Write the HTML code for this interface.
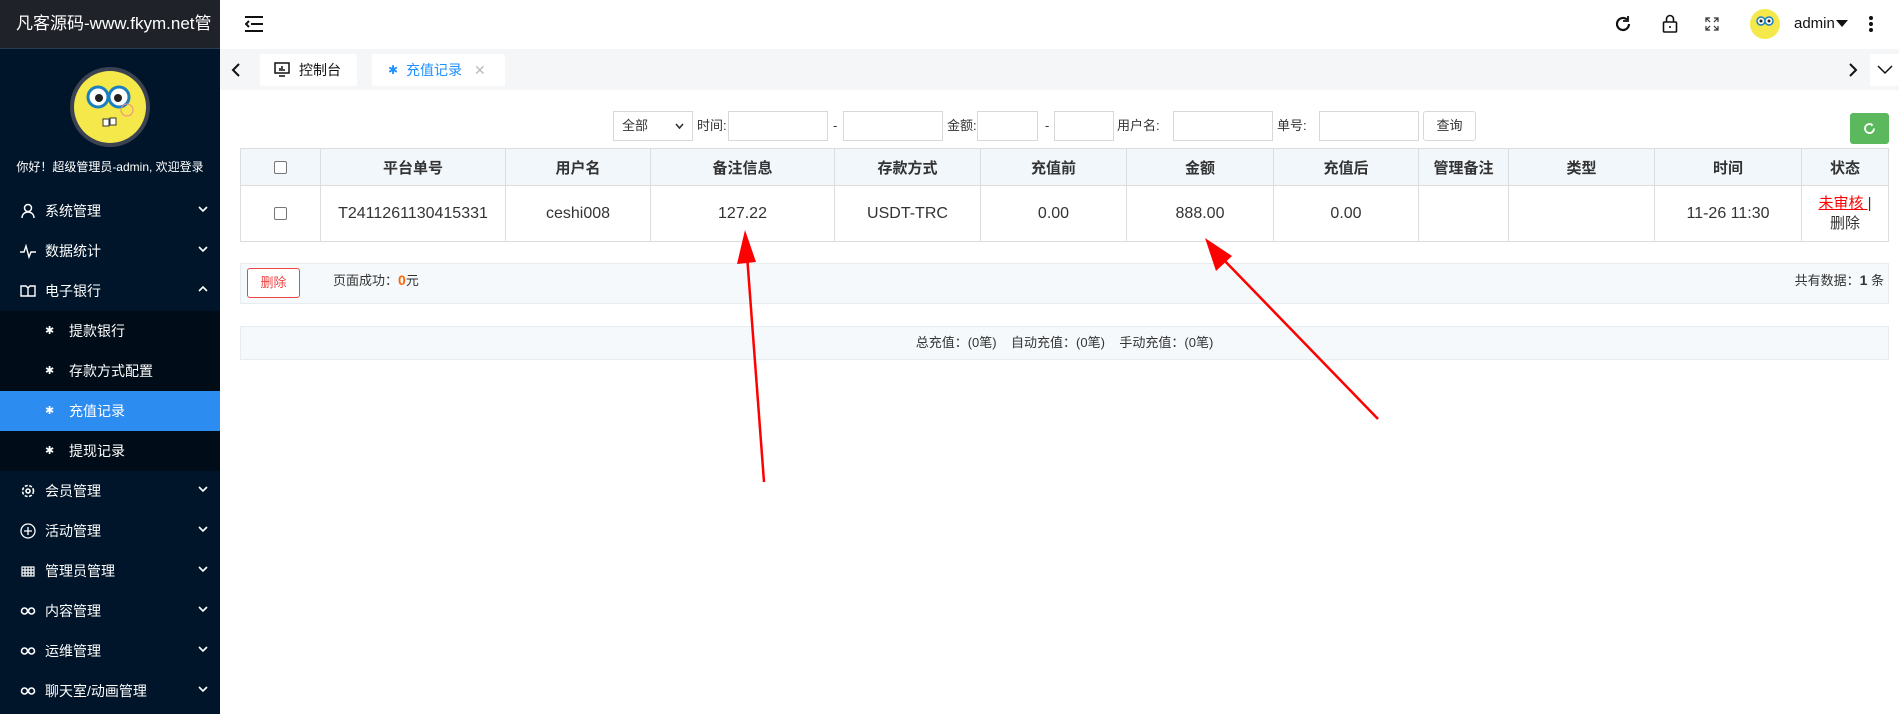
<!DOCTYPE html>
<html><head><meta charset="utf-8"><style>
*{margin:0;padding:0;box-sizing:border-box}
body{width:1899px;height:714px;overflow:hidden;background:#fff;font-family:"Liberation Sans","Noto Sans CJK SC",sans-serif;position:relative;color:#333}
.abs{position:absolute}
#side{left:0;top:0;width:220px;height:714px;background:#001529}
#logo{left:0;top:0;width:220px;height:49px;background:#20222a;border-bottom:1px solid #2b3a55;color:#fff;font-size:17px;line-height:48px;padding-left:16px;white-space:nowrap;overflow:hidden}
.mi{position:absolute;left:0;width:220px;height:40px;color:#fff;font-size:14px;line-height:40px}
.mi .ic{position:absolute;left:20px;top:12px;width:16px;height:16px}
.mi .t{position:absolute;left:45px}
.mi .ch{position:absolute;left:198px;top:13px;width:10px;height:10px}
.sub .t{left:69px}
.sub .ic{left:45px}
.inp{position:absolute;top:111px;height:30px;border:1px solid #d8d8d8;background:#fff}
.lb{position:absolute;top:111px;line-height:30px;font-size:13px;color:#333}
table{position:absolute;left:240px;top:148px;border-collapse:collapse;width:1649px;font-size:16px}
td,th{border:1px solid #ddd;text-align:center;color:#333}
th{height:37px;background:#f2f7fb;font-size:15px}
td{height:56px}
.cb{display:inline-block;width:13px;height:13px;border:1px solid #767676;border-radius:2px;vertical-align:middle;background:#fff}
</style></head><body>
<div id="side" class="abs">
<div id="logo" class="abs">凡客源码-www.fkym.net管</div>
<svg class="abs" style="left:69px;top:66px" width="82" height="82" viewBox="0 0 82 82"><circle cx="41" cy="41" r="40" fill="#3b4252"/><circle cx="41" cy="41" r="36" fill="#f4e84a"/><circle cx="29" cy="31" r="10" fill="#fff" stroke="#1a7fc0" stroke-width="3"/><circle cx="50" cy="31" r="10" fill="#fff" stroke="#1a7fc0" stroke-width="3"/><circle cx="30" cy="32" r="4" fill="#222"/><circle cx="49" cy="32" r="4" fill="#222"/><rect x="34" y="53" width="6" height="7" fill="#fff" stroke="#333"/><rect x="41" y="52" width="6" height="7" fill="#fff" stroke="#333"/><circle cx="58" cy="44" r="6" fill="none" stroke="#e88" stroke-width="1"/></svg>
<div class="abs" style="left:0;top:158px;width:220px;text-align:center;color:#fff;font-size:12px;line-height:18px">你好！超级管理员-admin, 欢迎登录</div>
<div class="abs" style="left:0;top:311px;width:220px;height:160px;background:#000c17"></div>
<div class="abs" style="left:0;top:391px;width:220px;height:40px;background:#2d8cf0"></div>
<div class="mi" style="top:191px"><svg class="ic" viewBox="0 0 16 16" fill="none" stroke="#fff" stroke-width="1.5"><circle cx="8" cy="5" r="3.5"/><path d="M2 15c0-4 3-6 6-6s6 2 6 6"/></svg><span class="t">系统管理</span><svg class="ch" viewBox="0 0 10 10"><path d="M1 3l4 4 4-4" stroke="#fff" stroke-width="1.6" fill="none"/></svg></div>
<div class="mi" style="top:231px"><svg class="ic" viewBox="0 0 16 16" fill="none" stroke="#fff" stroke-width="1.4"><path d="M0 9h4l2-6 3 11 2-5h5"/></svg><span class="t">数据统计</span><svg class="ch" viewBox="0 0 10 10"><path d="M1 3l4 4 4-4" stroke="#fff" stroke-width="1.6" fill="none"/></svg></div>
<div class="mi" style="top:271px"><svg class="ic" viewBox="0 0 16 16" fill="none" stroke="#fff" stroke-width="1.4"><path d="M1 3h5l2 2 2-2h5v10H1z M8 5v8"/></svg><span class="t">电子银行</span><svg class="ch" viewBox="0 0 10 10"><path d="M1 7l4-4 4 4" stroke="#fff" stroke-width="1.6" fill="none"/></svg></div>
<div class="mi sub" style="top:311px"><span class="ic" style="font-size:11px;line-height:16px">✱</span><span class="t">提款银行</span></div>
<div class="mi sub" style="top:351px"><span class="ic" style="font-size:11px;line-height:16px">✱</span><span class="t">存款方式配置</span></div>
<div class="mi sub" style="top:391px"><span class="ic" style="font-size:11px;line-height:16px">✱</span><span class="t">充值记录</span></div>
<div class="mi sub" style="top:431px"><span class="ic" style="font-size:11px;line-height:16px">✱</span><span class="t">提现记录</span></div>
<div class="mi" style="top:471px"><svg class="ic" viewBox="0 0 16 16" fill="none" stroke="#fff" stroke-width="1.6"><circle cx="8" cy="8" r="5.5" stroke-dasharray="3 1.5"/><circle cx="8" cy="8" r="2"/></svg><span class="t">会员管理</span><svg class="ch" viewBox="0 0 10 10"><path d="M1 3l4 4 4-4" stroke="#fff" stroke-width="1.6" fill="none"/></svg></div>
<div class="mi" style="top:511px"><svg class="ic" viewBox="0 0 16 16" fill="none" stroke="#fff" stroke-width="1.3"><circle cx="8" cy="8" r="7"/><path d="M8 4v8M4 8h8"/></svg><span class="t">活动管理</span><svg class="ch" viewBox="0 0 10 10"><path d="M1 3l4 4 4-4" stroke="#fff" stroke-width="1.6" fill="none"/></svg></div>
<div class="mi" style="top:551px"><svg class="ic" viewBox="0 0 16 16" fill="none" stroke="#fff" stroke-width="1.2"><rect x="2" y="4" width="12" height="9"/><path d="M2 7h12M2 10h12M5 4v9M8 4v9M11 4v9"/></svg><span class="t">管理员管理</span><svg class="ch" viewBox="0 0 10 10"><path d="M1 3l4 4 4-4" stroke="#fff" stroke-width="1.6" fill="none"/></svg></div>
<div class="mi" style="top:591px"><svg class="ic" viewBox="0 0 16 16" fill="none" stroke="#fff" stroke-width="1.6"><circle cx="4.5" cy="8" r="3"/><circle cx="11.5" cy="8" r="3"/></svg><span class="t">内容管理</span><svg class="ch" viewBox="0 0 10 10"><path d="M1 3l4 4 4-4" stroke="#fff" stroke-width="1.6" fill="none"/></svg></div>
<div class="mi" style="top:631px"><svg class="ic" viewBox="0 0 16 16" fill="none" stroke="#fff" stroke-width="1.6"><circle cx="4.5" cy="8" r="3"/><circle cx="11.5" cy="8" r="3"/></svg><span class="t">运维管理</span><svg class="ch" viewBox="0 0 10 10"><path d="M1 3l4 4 4-4" stroke="#fff" stroke-width="1.6" fill="none"/></svg></div>
<div class="mi" style="top:671px"><svg class="ic" viewBox="0 0 16 16" fill="none" stroke="#fff" stroke-width="1.6"><circle cx="4.5" cy="8" r="3"/><circle cx="11.5" cy="8" r="3"/></svg><span class="t">聊天室/动画管理</span><svg class="ch" viewBox="0 0 10 10"><path d="M1 3l4 4 4-4" stroke="#fff" stroke-width="1.6" fill="none"/></svg></div>
</div>

<!-- header -->
<svg class="abs" style="left:245px;top:16px" width="18" height="16" viewBox="0 0 18 16" stroke="#111" stroke-width="2" fill="none"><path d="M0 1h18M6 8h12M0 15h18M4 5l-3 3 3 3"/></svg>
<svg class="abs" style="left:1614px;top:15px" width="18" height="18" viewBox="0 0 18 18" fill="none" stroke="#111" stroke-width="2.2"><path d="M15 9a6 6 0 1 1-2-4.5"/><path d="M14 1v5h-5" stroke-width="1.8"/></svg>
<svg class="abs" style="left:1662px;top:14px" width="16" height="19" viewBox="0 0 16 19" fill="none" stroke="#111" stroke-width="1.6"><rect x="1.5" y="8" width="13" height="10" rx="1"/><path d="M4.5 8V5a3.5 3.5 0 0 1 7 0v3M8 12v2"/></svg>
<svg class="abs" style="left:1705px;top:17px" width="14" height="14" viewBox="0 0 14 14" fill="none" stroke="#333" stroke-width="1.2"><path d="M1 5V1h4M1 1l4 4M13 5V1H9M13 1L9 5M1 9v4h4M1 13l4-4M13 9v4H9M13 13l-4-4"/></svg>
<svg class="abs" style="left:1750px;top:9px" width="30" height="30" viewBox="0 0 30 30"><circle cx="15" cy="15" r="15" fill="#f4e84a"/><circle cx="11" cy="12" r="4" fill="#fff" stroke="#1a7fc0" stroke-width="1.5"/><circle cx="19" cy="12" r="4" fill="#fff" stroke="#1a7fc0" stroke-width="1.5"/><circle cx="11" cy="12" r="1.5" fill="#222"/><circle cx="19" cy="12" r="1.5" fill="#222"/></svg>
<div class="abs" style="left:1794px;top:12px;font-size:15px;color:#111;line-height:24px">admin</div>
<svg class="abs" style="left:1836px;top:20px" width="12" height="8" viewBox="0 0 12 8"><path d="M0 0h12L6 7z" fill="#111"/></svg>
<svg class="abs" style="left:1868px;top:15px" width="6" height="18" viewBox="0 0 6 18" fill="#111"><circle cx="3" cy="3" r="2"/><circle cx="3" cy="9" r="2"/><circle cx="3" cy="15" r="2"/></svg>

<!-- tab bar -->
<div class="abs" style="left:220px;top:49px;width:1679px;height:41px;background:#f5f6f8"></div>
<svg class="abs" style="left:231px;top:62px" width="10" height="16" viewBox="0 0 10 16"><path d="M8 2L2 8l6 6" stroke="#111" stroke-width="2" fill="none"/></svg>
<div class="abs" style="left:260px;top:54px;width:97px;height:32px;background:#fff;border-radius:2px"></div>
<svg class="abs" style="left:274px;top:62px" width="16" height="15" viewBox="0 0 16 15" fill="none" stroke="#111" stroke-width="1.5"><rect x="1" y="1" width="14" height="10"/><path d="M5 14h6M6 9V6M8 9V4M10 9V7"/></svg>
<div class="abs" style="left:299px;top:54px;line-height:32px;font-size:14px;color:#111">控制台</div>
<div class="abs" style="left:372px;top:54px;width:133px;height:32px;background:#fff;border-radius:2px"></div>
<div class="abs" style="left:388px;top:54px;line-height:32px;font-size:12px;color:#1e90ff">✱</div>
<div class="abs" style="left:406px;top:54px;line-height:32px;font-size:14px;color:#1e90ff">充值记录</div>
<div class="abs" style="left:474px;top:54px;line-height:32px;font-size:14px;color:#bbb">✕</div>
<svg class="abs" style="left:1848px;top:62px" width="10" height="16" viewBox="0 0 10 16"><path d="M2 2l6 6-6 6" stroke="#111" stroke-width="2" fill="none"/></svg>
<div class="abs" style="left:1870px;top:54px;width:29px;height:32px;background:#fff"></div>
<svg class="abs" style="left:1877px;top:65px" width="16" height="10" viewBox="0 0 16 10"><path d="M1 1l7 7 7-7" stroke="#111" stroke-width="1.5" fill="none"/></svg>

<!-- filters -->
<div class="inp" style="left:613px;width:80px;font-size:13px;line-height:28px;padding-left:8px">全部<svg style="position:absolute;right:8px;top:11px" width="9" height="7" viewBox="0 0 9 7"><path d="M1 1l3.5 4L8 1" stroke="#333" stroke-width="1.6" fill="none"/></svg></div>
<div class="lb" style="left:697px">时间:</div>
<div class="inp" style="left:728px;width:100px"></div>
<div class="lb" style="left:833px">-</div>
<div class="inp" style="left:843px;width:100px"></div>
<div class="lb" style="left:947px">金额:</div>
<div class="inp" style="left:977px;width:61px"></div>
<div class="lb" style="left:1045px">-</div>
<div class="inp" style="left:1054px;width:60px"></div>
<div class="lb" style="left:1117px">用户名:</div>
<div class="inp" style="left:1173px;width:100px"></div>
<div class="lb" style="left:1277px">单号:</div>
<div class="inp" style="left:1319px;width:100px"></div>
<div class="inp" style="left:1423px;width:53px;border-radius:3px;font-size:13px;line-height:28px;text-align:center">查询</div>
<div class="abs" style="left:1850px;top:113px;width:39px;height:31px;background:#5cb85c;border-radius:3px"><svg style="position:absolute;left:13px;top:9px" width="13" height="13" viewBox="0 0 13 13"><path d="M11 6.5A4.5 4.5 0 1 1 9 2.8" stroke="#fff" stroke-width="1.8" fill="none"/><path d="M8 1l2.5 2-2.5 1.5z" fill="#fff"/></svg></div>

<table>
<tr><th style="width:80px"><span class="cb"></span></th><th style="width:185px">平台单号</th><th style="width:145px">用户名</th><th style="width:184px">备注信息</th><th style="width:146px">存款方式</th><th style="width:146px">充值前</th><th style="width:147px">金额</th><th style="width:145px">充值后</th><th style="width:90px">管理备注</th><th style="width:146px">类型</th><th style="width:147px">时间</th><th>状态</th></tr>
<tr><td><span class="cb"></span></td><td>T2411261130415331</td><td>ceshi008</td><td>127.22</td><td>USDT-TRC</td><td>0.00</td><td>888.00</td><td>0.00</td><td></td><td></td><td>11-26 11:30</td><td style="font-size:15px;line-height:20px"><span style="color:#f00;text-decoration:underline">未审核 </span>|<br>删除</td></tr>
</table>

<div class="abs" style="left:240px;top:263px;width:1649px;height:41px;background:#f5f9fc;border:1px solid #e6ecf0"></div>
<div class="abs" style="left:247px;top:268px;width:53px;height:30px;border:1px solid #e44;border-radius:3px;color:#e44;font-size:13px;line-height:28px;text-align:center;background:#fff">删除</div>
<div class="abs" style="left:333px;top:271px;font-size:13px;line-height:18px">页面成功：<b style="color:#f60;font-size:14px">0</b>元</div>
<div class="abs" style="right:15px;top:271px;font-size:13px;line-height:18px">共有数据：<b style="font-size:14px">1</b> 条</div>
<div class="abs" style="left:240px;top:326px;width:1649px;height:34px;background:#f5f9fc;border:1px solid #e6ecf0;text-align:center;font-size:13px;line-height:32px">总充值：(0笔) &nbsp; &nbsp;自动充值：(0笔) &nbsp; &nbsp;手动充值：(0笔)</div>

<svg class="abs" style="left:0;top:0" width="1899" height="714">
<path d="M764 482L747 255" stroke="#f00" stroke-width="2.5"/>
<path d="M745 230L737 264L756 262z" fill="#f00"/>
<path d="M1378 419L1222 258" stroke="#f00" stroke-width="2.5"/>
<path d="M1205 238L1216 271L1232 256z" fill="#f00"/>
</svg>
</body></html>
